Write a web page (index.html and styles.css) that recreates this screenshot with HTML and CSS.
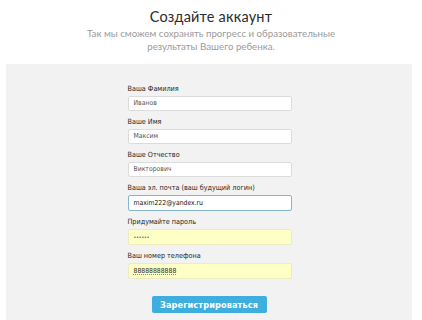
FILE: index.html
```html
<!DOCTYPE html>
<html lang="ru">
<head>
<meta charset="utf-8">
<title>Создайте аккаунт</title>
<link rel="stylesheet" href="styles.css">
</head>
<body>
<header class="intro">
  <h1 class="title">Создайте аккаунт</h1>
  <p class="subtitle">Так мы сможем сохранять прогресс и образовательные<br>результаты Вашего ребенка.</p>
</header>
<main class="panel">
  <form class="form">
    <div class="field">
      <label class="label">Ваша Фамилия</label>
      <div class="input">Иванов</div>
    </div>
    <div class="field">
      <label class="label">Ваше Имя</label>
      <div class="input">Максим</div>
    </div>
    <div class="field">
      <label class="label">Ваше Отчество</label>
      <div class="input">Викторович</div>
    </div>
    <div class="field">
      <label class="label">Ваша эл. почта (ваш будущий логин)</label>
      <div class="input input-focus">maxim222@yandex.ru</div>
    </div>
    <div class="field">
      <label class="label">Придумайте пароль</label>
      <div class="input input-auto input-pass">••••••</div>
    </div>
    <div class="field">
      <label class="label">Ваш номер телефона</label>
      <div class="input input-auto"><span class="spell">88888888888</span></div>
    </div>
    <div class="actions">
      <button type="button" class="btn">Зарегистрироваться</button>
    </div>
  </form>
</main>
</body>
</html>
```
FILE: styles.css
```css
html, body {
  margin: 0;
  padding: 0;
  background: #ffffff;
  height: 100%;
  overflow: hidden;
}
body {
  display: flex;
  flex-direction: column;
}
.intro {
  text-align: center;
  padding-top: 7px;
}
.title {
  margin: 0 0 1px;
  font-family: Lato, "Open Sans", sans-serif;
  font-weight: 400;
  font-size: 14.5px;
  line-height: 19px;
  color: #2b2b2b;
  letter-spacing: 0.2px;
}
.subtitle {
  margin: 0;
  font-family: Lato, "Open Sans", sans-serif;
  font-size: 9.7px;
  line-height: 13px;
  color: #9a9a9a;
}
.panel {
  flex: 1;
  margin: 11px 10px 0 6px;
  background: #f2f2f2;
  display: flex;
  justify-content: center;
  padding-top: 20px;
}
.form {
  width: 164px;
  margin-left: 1px;
  display: flex;
  flex-direction: column;
  gap: 6px;
}
.field {
  display: flex;
  flex-direction: column;
  gap: 2px;
}
.label {
  font-family: "DejaVu Sans Condensed", "DejaVu Sans", sans-serif;
  font-size: 7.2px;
  line-height: 10px;
  color: #1e1e1e;
}
.input {
  box-sizing: border-box;
  height: 15px;
  border: 1px solid #dcdcdc;
  background: #ffffff;
  border-radius: 2px;
  padding: 0 5px;
  font-family: "DejaVu Sans Condensed", "DejaVu Sans", sans-serif;
  font-size: 6.8px;
  line-height: 13px;
  color: #555;
}
.input-focus {
  height: 16px;
  border-color: #86b6cc;
  color: #111;
  padding-left: 5px;
  line-height: 14px;
}
.input-auto {
  height: 16px;
  background: #fdffc4;
  border-color: #ececc0;
  color: #333;
  line-height: 14px;
}
.input-pass {
  font-size: 5px;
  letter-spacing: 0;
}
.spell {
  text-decoration: underline dotted #888;
}
.actions {
  display: flex;
  justify-content: center;
  margin-top: 11px;
  margin-left: -1px;
}
.btn {
  width: 115px;
  height: 17px;
  border: 0;
  border-radius: 2px;
  background: #3daedd;
  color: #fff;
  font-family: "DejaVu Sans", sans-serif;
  font-weight: 700;
  font-size: 8.2px;
  letter-spacing: 0.1px;
  padding: 0;
}
```
